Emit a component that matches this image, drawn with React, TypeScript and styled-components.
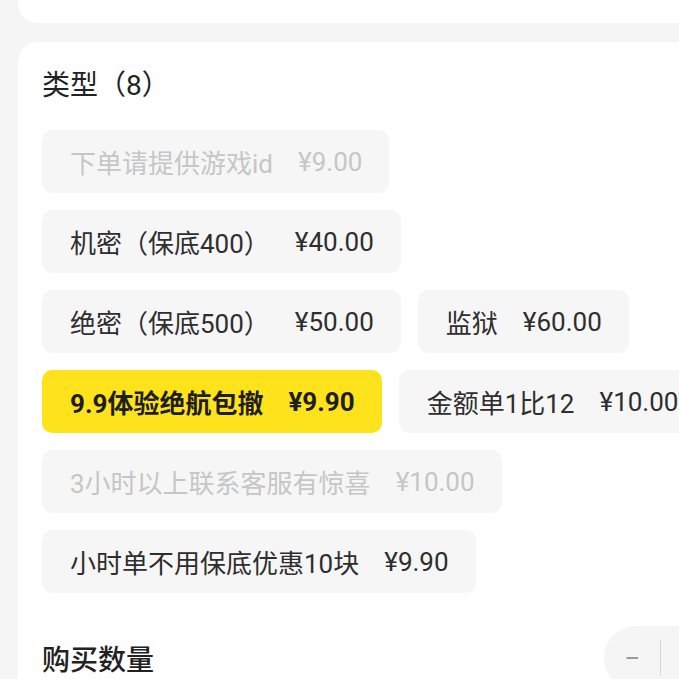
import React from "react";
import styled, { createGlobalStyle } from "styled-components";

const Global = createGlobalStyle`
  html, body { margin: 0; padding: 0; background: #f5f5f5; }
  body { font-family: Roboto, "Noto Sans CJK SC", sans-serif; overflow: hidden; }
`;

const Page = styled.div`
  width: 679px;
  height: 679px;
  overflow: hidden;
  background: #f5f5f5;
  display: flex;
  flex-direction: column;
  gap: 19px;
  padding-left: 18px;
  box-sizing: border-box;
`;

const TopCard = styled.div`
  width: 802px;
  height: 23px;
  flex: none;
  background: #fff;
  border-radius: 0 0 20px 20px;
`;

const Card = styled.div`
  width: 802px;
  flex: none;
  background: #fff;
  border-radius: 20px;
  padding: 25px 24px 40px;
  box-sizing: border-box;
`;

const Title = styled.div`
  font-size: 28px;
  line-height: 38px;
  color: #222;
  font-weight: 400;
`;

const Chips = styled.div`
  display: flex;
  flex-wrap: wrap;
  gap: 17px 17px;
  margin-top: 25px;
  max-width: 716px;
`;

const Chip = styled.div<{ $state: "normal" | "disabled" | "active" }>`
  height: 63px;
  box-sizing: border-box;
  padding: 0 27px 0 28px;
  display: flex;
  align-items: center;
  border-radius: 10px;
  font-size: 26px;
  white-space: nowrap;
  background: ${(p) => (p.$state === "active" ? "#fde21c" : "#f6f6f6")};
  color: ${(p) =>
    p.$state === "disabled" ? "#c6c6c6" : p.$state === "active" ? "#1e1e1e" : "#2e2e2e"};
  font-weight: ${(p) => (p.$state === "active" ? 700 : 400)};
`;

const Price = styled.span`
  margin-left: 25px;
`;

const QtyRow = styled.div`
  display: flex;
  align-items: center;
  justify-content: space-between;
  margin-top: 33px;
`;

const QtyLabel = styled.div`
  font-size: 28px;
  font-weight: 500;
  color: #222;
`;

const Stepper = styled.div`
  display: flex;
  align-items: center;
  height: 64px;
  border-radius: 32px;
  background: #f5f5f5;
  overflow: hidden;
`;

const StepBtn = styled.div`
  width: 56px;
  height: 64px;
  display: flex;
  align-items: center;
  justify-content: center;
  color: #9a9a9a;
  font-size: 28px;
`;

const Divider = styled.div`
  width: 1px;
  height: 36px;
  background: #d8d8d8;
`;

const Num = styled.div`
  width: 78px;
  text-align: center;
  font-size: 24px;
  color: #222;
`;

type Item = { name: string; price: string; state: "normal" | "disabled" | "active" };

const items: Item[] = [
  { name: "下单请提供游戏id", price: "¥9.00", state: "disabled" },
  { name: "机密（保底400）", price: "¥40.00", state: "normal" },
  { name: "绝密（保底500）", price: "¥50.00", state: "normal" },
  { name: "监狱", price: "¥60.00", state: "normal" },
  { name: "9.9体验绝航包撤", price: "¥9.90", state: "active" },
  { name: "金额单1比12", price: "¥10.00", state: "normal" },
  { name: "3小时以上联系客服有惊喜", price: "¥10.00", state: "disabled" },
  { name: "小时单不用保底优惠10块", price: "¥9.90", state: "normal" },
];

export default function App() {
  return (
    <>
      <Global />
      <Page>
        <TopCard />
        <Card>
          <Title>类型（8）</Title>
          <Chips>
            {items.map((it) => (
              <Chip key={it.name} $state={it.state}>
                {it.name}
                <Price>{it.price}</Price>
              </Chip>
            ))}
          </Chips>
          <QtyRow>
            <QtyLabel>购买数量</QtyLabel>
            <Stepper>
              <StepBtn>−</StepBtn>
              <Divider />
              <Num>1</Num>
              <Divider />
              <StepBtn>+</StepBtn>
            </Stepper>
          </QtyRow>
        </Card>
      </Page>
    </>
  );
}
